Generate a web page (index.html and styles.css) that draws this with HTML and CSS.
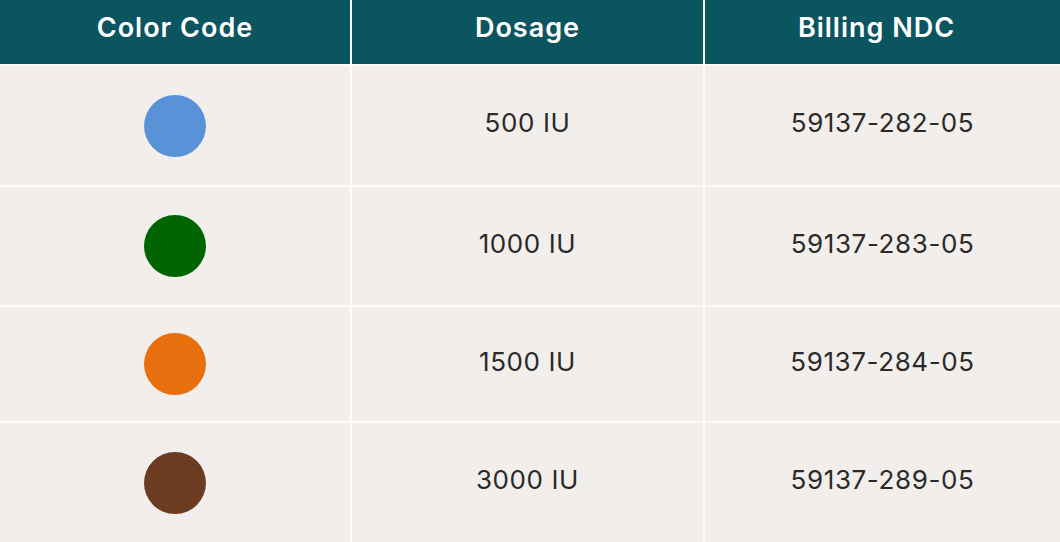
FILE: index.html
```html
<!DOCTYPE html>
<html lang="en">
<head>
<meta charset="utf-8">
<title>Dosage Table</title>
<link rel="stylesheet" href="styles.css">
</head>
<body>
<div class="table">
  <div class="head">Color Code</div>
  <div class="head">Dosage</div>
  <div class="head head-last">Billing NDC</div>

  <div class="cell"><span class="dot blue"></span></div>
  <div class="cell text">500 IU</div>
  <div class="cell text">59137-282-05</div>

  <div class="cell"><span class="dot green"></span></div>
  <div class="cell text">1000 IU</div>
  <div class="cell text">59137-283-05</div>

  <div class="cell"><span class="dot orange"></span></div>
  <div class="cell text">1500 IU</div>
  <div class="cell text">59137-284-05</div>

  <div class="cell"><span class="dot brown"></span></div>
  <div class="cell text">3000 IU</div>
  <div class="cell text">59137-289-05</div>
</div>
</body>
</html>
```

FILE: styles.css
```css
html, body {
  margin: 0;
  padding: 0;
  background: #fdfbf8;
}

.table {
  display: grid;
  grid-template-columns: 350px 351px 1fr;
  grid-template-rows: 64px 119px 118px 114px 119px;
  gap: 2px;
  width: 1060px;
  height: 542px;
  background: #fdfbf8;
  font-family: "Inter", "Lato", sans-serif;
}

.head {
  background: #0b5560;
  color: #ffffff;
  font-weight: 600;
  font-size: 27px;
  letter-spacing: 1px;
  display: flex;
  align-items: center;
  justify-content: center;
  padding-bottom: 10px;
}

.head-last {
  padding-right: 12px;
}

.cell {
  background: #f1eeeb;
  color: #2a2a2a;
  font-size: 26px;
  display: flex;
  align-items: center;
  justify-content: center;
}

.cell.text {
  padding-bottom: 6px;
  letter-spacing: 0.6px;
}

.dot {
  width: 62px;
  height: 62px;
  border-radius: 50%;
  display: block;
}

.blue { background: #5a92d8; }
.green { background: #006500; }
.orange { background: #e86f0d; }
.brown { background: #6b3c21; }
```
